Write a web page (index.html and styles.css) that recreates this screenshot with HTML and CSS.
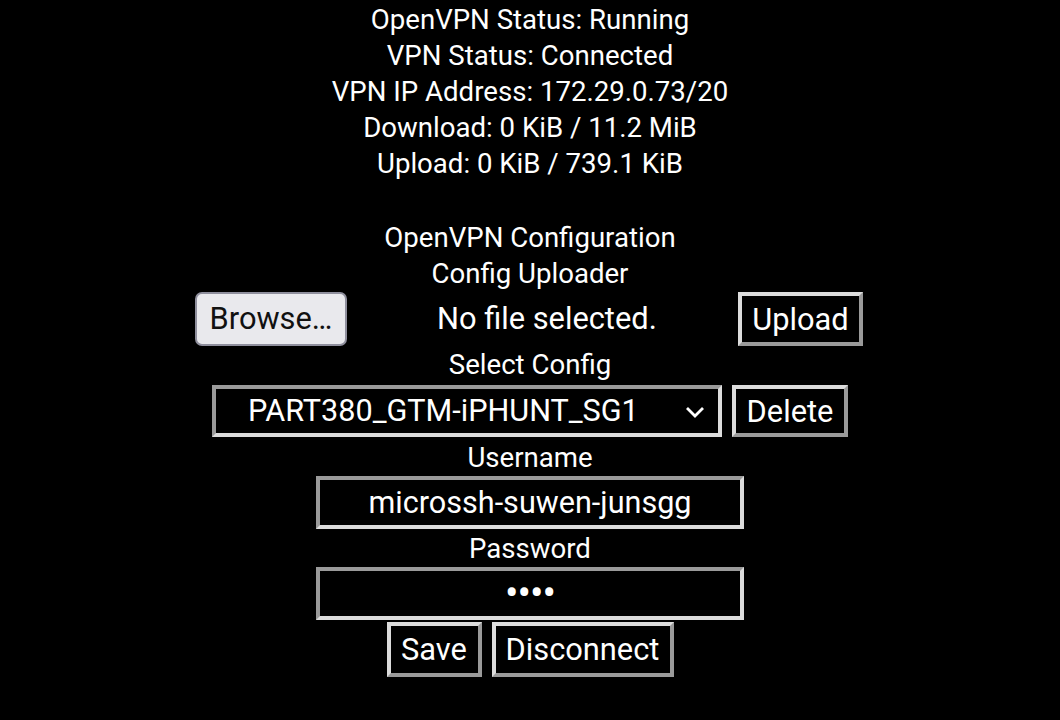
FILE: index.html
```html
<!DOCTYPE html>
<html lang="en">
<head>
    <meta charset="UTF-8">
    <meta name="viewport" content="width=device-width, initial-scale=1.0">
    <title>OpenVPN</title>
    <link rel="stylesheet" href="styles.css">
</head>
<body>
    <div class="status">
        <div>OpenVPN Status: Running</div>
        <div>VPN Status: Connected</div>
        <div>VPN IP Address: 172.29.0.73/20</div>
        <div>Download: 0 KiB / 11.2 MiB</div>
        <div>Upload: 0 KiB / 739.1 KiB</div>
    </div>

    <div class="config">
        <div>OpenVPN Configuration</div>
        <div>Config Uploader</div>
        <div class="upload-row">
            <div class="file-input">
                <span class="browse-btn">Browse…</span>
                <span class="file-name">No file selected.</span>
            </div>
            <button class="btn btn-upload">Upload</button>
        </div>

        <div class="label">Select Config</div>
        <div class="select-row">
            <div class="select">
                <span class="select-text">PART380_GTM-iPHUNT_SG1</span>
                <svg class="chevron" width="20" height="12" viewBox="0 0 20 12">
                    <path d="M2 2 L10 10 L18 2" fill="none" stroke="#fff" stroke-width="2.8"/>
                </svg>
            </div>
            <button class="btn btn-delete">Delete</button>
        </div>

        <div class="label">Username</div>
        <input class="field" type="text" value="microssh-suwen-junsgg">
        <div class="label label-pass">Password</div>
        <input class="field field-pass" type="password" value="test">

        <div class="actions">
            <button class="btn btn-save">Save</button>
            <button class="btn btn-disconnect">Disconnect</button>
        </div>
    </div>
</body>
</html>
```

FILE: styles.css
```css
body {
    margin: 0;
    padding-top: 2px;
    background: #000;
    color: #fff;
    font-family: Roboto, "Liberation Sans", sans-serif;
    font-size: 27.6px;
    line-height: 36px;
    text-align: center;
}

.status div,
.config > div:not([class]) {
    height: 36px;
}

.config {
    margin-top: 38px;
    display: flex;
    flex-direction: column;
    align-items: center;
}

.upload-row {
    display: flex;
    align-items: center;
    height: 54px;
    width: 668px;
    margin-left: -2px;
}

.file-input {
    display: flex;
    align-items: center;
    flex: 1;
}

.browse-btn {
    width: 148px;
    height: 50px;
    line-height: 50px;
    background: #e9e9ed;
    color: #111;
    border: 2px solid #8f8f9d;
    border-radius: 7px;
    font-size: 30.8px;
}

.file-name {
    margin-left: 90px;
    font-size: 30.8px;
}

.btn {
    background: #000;
    color: #fff;
    font-family: inherit;
    font-size: 30.8px;
    padding: 0;
    border-style: solid;
    border-width: 4px;
    border-color: #dcdcdc #9a9a9a #9a9a9a #dcdcdc;
    cursor: pointer;
}

.btn-upload {
    width: 125px;
    height: 54px;
}

.label {
    height: 36px;
    margin-top: 1px;
}

.select-row {
    display: flex;
    gap: 10px;
    margin-top: 2px;
    height: 52px;
}

.select {
    box-sizing: border-box;
    width: 510px;
    height: 52px;
    display: flex;
    align-items: center;
    justify-content: space-between;
    padding: 0 13px 0 32px;
    border-style: solid;
    border-width: 4px;
    border-color: #9a9a9a #dcdcdc #dcdcdc #9a9a9a;
    font-size: 30.6px;
}

.chevron {
    margin-top: 2px;
}

.btn-delete {
    width: 116px;
    height: 52px;
}

.select-row + .label {
    margin-top: 3px;
}

.field {
    box-sizing: border-box;
    width: 428px;
    height: 53px;
    background: #000;
    color: #fff;
    font-family: inherit;
    font-size: 30.6px;
    text-align: center;
    border-style: solid;
    border-width: 4px;
    border-color: #9a9a9a #dcdcdc #dcdcdc #9a9a9a;
    outline: none;
    padding: 0;
}

.label-pass {
    margin-top: 2px;
}

.field-pass {
    font-size: 40px;
    letter-spacing: -1px;
}

.actions {
    display: flex;
    gap: 10px;
    margin-top: 2px;
}

.btn-save {
    width: 95px;
    height: 55px;
}

.btn-disconnect {
    width: 182px;
    height: 55px;
}
```
